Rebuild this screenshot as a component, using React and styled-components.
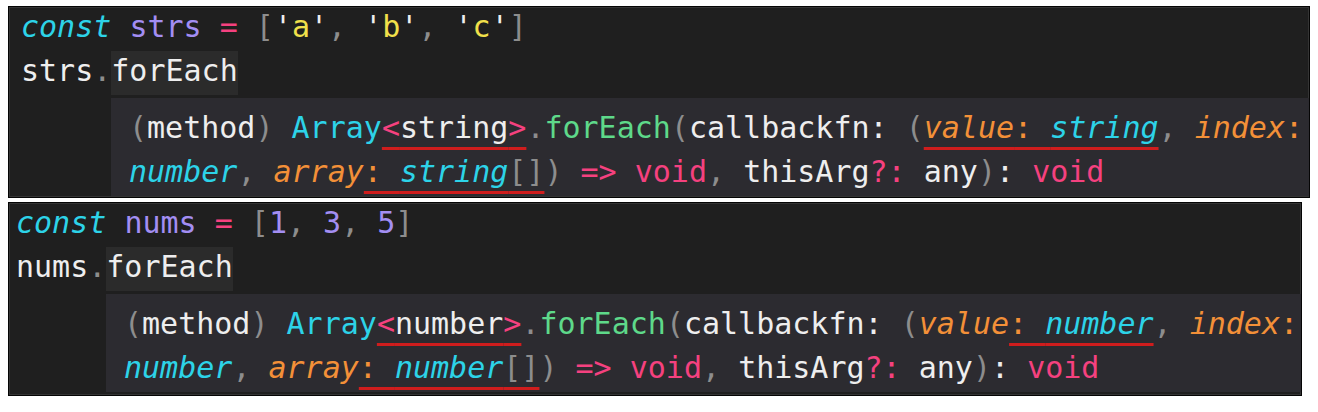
import React from 'react';
import styled, { createGlobalStyle } from 'styled-components';

const palette = {
  white: '#eeeeee',
  gray: '#8d8d8d',
  cyan: '#2dd3e8',
  purple: '#a38ef3',
  pink: '#f5417f',
  yellow: '#f1e04b',
  green: '#5ed98a',
  orange: '#f39038',
};

const GlobalStyle = createGlobalStyle`
  body {
    margin: 0;
    background: #ffffff;
  }
`;

const Page = styled.div`
  display: flex;
  flex-direction: column;
  gap: 4px;
  padding: 6px 0 0 8px;
`;

const Panel = styled.div`
  width: ${props => props.$width}px;
  box-sizing: border-box;
  background: #1f1f1f;
  border: 1px solid #050505;
  box-shadow: inset 0 0 0 1px #343434;
  padding-bottom: ${props => props.$bottom}px;
  font-family: 'DejaVu Sans Mono', 'Liberation Mono', monospace;
  font-size: 30px;
  color: ${palette.white};
`;

const CodeLine = styled.div`
  height: 44px;
  line-height: 40px;
  white-space: pre;
  padding-left: ${props => props.$indent}px;
`;

const Token = styled.span`
  color: ${props => palette[props.$c]};
  font-style: ${props => (props.$i ? 'italic' : 'normal')};
`;

const Highlight = styled.span`
  display: inline-block;
  height: 44px;
  background: #2b2b2b;
`;

const Squiggle = styled.span`
  text-decoration: underline;
  text-decoration-color: #cf1d1d;
  text-decoration-thickness: 3px;
  text-underline-offset: 9px;
  text-decoration-skip-ink: none;
`;

const Hover = styled.div`
  margin: 3px 0 0 ${props => props.$indent + 90}px;
  padding: 10px 0 0 18px;
  background: #2c2b30;
`;

const HoverLine = styled.div`
  height: 44px;
  line-height: 40px;
  white-space: pre;
`;

// token: [text, colour, italic?]; a nested array is one underlined group
const renderTokens = tokens =>
  tokens.map((t, i) => {
    if (Array.isArray(t[0])) {
      return <Squiggle key={i}>{renderTokens(t)}</Squiggle>;
    }
    return (
      <Token key={i} $c={t[1]} $i={t[2]}>
        {t[0]}
      </Token>
    );
  });

// the string sample marks "value: string", the number one only ": number"
const valueTokens = type =>
  type === 'string'
    ? [[['value', 'orange', true], [': ', 'orange'], [type, 'cyan', true]]]
    : [['value', 'orange', true], [[': ', 'orange'], [type, 'cyan', true]]];

const CodeBlock = ({ name, values, type, width, indent, bottom }) => (
  <Panel $width={width} $bottom={bottom}>
    <CodeLine $indent={indent}>
      {renderTokens([
        ['const', 'cyan', true],
        [' '],
        [name, 'purple'],
        [' '],
        ['=', 'pink'],
        [' '],
        ['[', 'gray'],
      ])}
      {values.map((v, i) => (
        <React.Fragment key={i}>
          {v.quoted
            ? renderTokens([["'", 'white'], [v.text, 'yellow'], ["'", 'white']])
            : renderTokens([[v.text, 'purple']])}
          {i < values.length - 1 && renderTokens([[', ', 'gray']])}
        </React.Fragment>
      ))}
      {renderTokens([[']', 'gray']])}
    </CodeLine>
    <CodeLine $indent={indent}>
      {renderTokens([[name, 'white'], ['.', 'gray']])}
      <Highlight>forEach</Highlight>
    </CodeLine>
    <Hover $indent={indent}>
      <HoverLine>
        {renderTokens([
          ['(', 'gray'],
          ['method', 'white'],
          [')', 'gray'],
          [' '],
          ['Array', 'cyan'],
          [['<', 'pink'], [type, 'white'], ['>', 'pink']],
          ['.', 'gray'],
          ['forEach', 'green'],
          ['(', 'gray'],
          ['callbackfn: ', 'white'],
          ['(', 'gray'],
          ...valueTokens(type),
          [', ', 'gray'],
          ['index', 'orange', true],
          [':', 'orange'],
        ])}
      </HoverLine>
      <HoverLine>
        {renderTokens([
          ['number', 'cyan', true],
          [', ', 'gray'],
          ['array', 'orange', true],
          [[': ', 'orange'], [type, 'cyan', true], ['[]', 'gray']],
          [')', 'gray'],
          [' '],
          ['=>', 'pink'],
          [' '],
          ['void', 'pink'],
          [', ', 'gray'],
          ['thisArg', 'white'],
          ['?:', 'pink'],
          [' '],
          ['any', 'white'],
          [')', 'gray'],
          [': ', 'white'],
          ['void', 'pink'],
        ])}
      </HoverLine>
    </Hover>
  </Panel>
);

const App = () => (
  <>
    <GlobalStyle />
    <Page>
      <CodeBlock
        name="strs"
        type="string"
        values={[
          { text: 'a', quoted: true },
          { text: 'b', quoted: true },
          { text: 'c', quoted: true },
        ]}
        width={1302}
        indent={12}
        bottom={1}
      />
      <CodeBlock
        name="nums"
        type="number"
        values={[{ text: '1' }, { text: '3' }, { text: '5' }]}
        width={1294}
        indent={7}
        bottom={3}
      />
    </Page>
  </>
);

export default App;
